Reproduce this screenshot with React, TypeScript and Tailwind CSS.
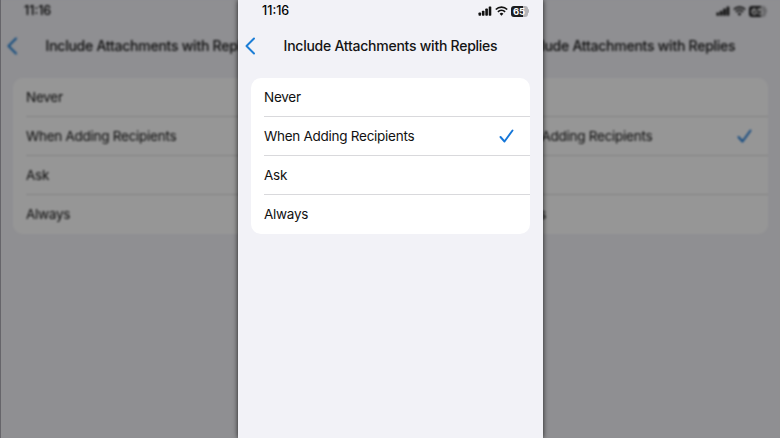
const OPTIONS = ["Never", "When Adding Recipients", "Ask", "Always"];

function Screen() {
  return (
    <div className="w-[305px] h-[438px] shrink-0 bg-[#f2f2f7] flex flex-col text-black">
      <div className="h-[22px] pl-6 pr-[14px] flex items-center justify-between">
        <span className="text-[12.5px] font-medium leading-none">11:16</span>
        <div className="flex items-center gap-[3px]">
          <svg width="14" height="10" viewBox="0 0 14 10" fill="#111">
            <rect x="0.5" y="6.6" width="2.6" height="3.2" rx="0.7" />
            <rect x="3.9" y="4.8" width="2.6" height="5" rx="0.7" />
            <rect x="7.3" y="2.6" width="2.6" height="7.2" rx="0.7" />
            <rect x="10.7" y="0.4" width="2.6" height="9.4" rx="0.7" />
          </svg>
          <svg width="13" height="10" viewBox="0 0 13 10" fill="none" stroke="#111" strokeWidth="1.7">
            <path d="M.8 3.5a8.2 8.2 0 0 1 11.4 0" />
            <path d="M2.9 5.8a5.2 5.2 0 0 1 7.2 0" />
            <path d="M6.5 9.8 4.6 7.8a2.7 2.7 0 0 1 3.8 0z" fill="#111" stroke="none" />
          </svg>
          <div className="flex items-center">
            <div className="w-[17px] h-[11px] rounded-[3px] bg-[linear-gradient(90deg,#1c1c1e_0,#1c1c1e_72%,#b4b4b8_72%)] text-white text-[9.5px] font-bold leading-[11px] text-center">
              65
            </div>
            <div className="w-[1.5px] h-[4px] bg-[#b4b4b8] rounded-r-sm" />
          </div>
        </div>
      </div>
      <div className="relative h-[48px] flex items-center justify-center">
        <svg className="absolute left-[6px] top-[15px]" width="12" height="18" viewBox="0 0 12 18" fill="none" stroke="#1c7ed6" strokeWidth="2" strokeLinecap="round" strokeLinejoin="round">
          <path d="M10 1.5 2.5 9l7.5 7.5" />
        </svg>
        <span className="text-[14px] font-medium tracking-[-0.25px] leading-none text-[#141414]">Include Attachments with Replies</span>
      </div>
      <div className="mx-[13px] mt-[8px] bg-white rounded-[10px] flex flex-col">
        {OPTIONS.map((o, i) => (
          <div key={o} className={`ml-[13px] h-[39px] pr-[16px] flex items-center justify-between ${i < 3 ? "border-b border-[#d9d9dc]" : ""}`}>
            <span className="text-[13.5px] tracking-[-0.27px] leading-none text-[#111] mt-[1px]">{o}</span>
            {i === 1 && (
              <svg width="15" height="14" viewBox="0 0 15 14" fill="none" stroke="#1576d8" strokeWidth="1.9" strokeLinecap="round" strokeLinejoin="round">
                <path d="M1.5 8 5.5 12.5 13.5 1.5" />
              </svg>
            )}
          </div>
        ))}
      </div>
    </div>
  );
}

export default function App() {
  return (
    <div className="w-[780px] h-[438px] overflow-hidden flex bg-[#8e8d93] font-['Inter',sans-serif]">
      <div className="w-[238px] h-full overflow-hidden flex justify-start shrink-0 border-l border-[#66656a]">
        <div className="-ml-px blur-[1.3px] brightness-[.59]"><Screen /></div>
      </div>
      <div className="relative z-10 w-[305px] shrink-0 shadow-[0_0_5px_rgba(0,0,0,0.8)]">
        <Screen />
      </div>
      <div className="w-[237px] h-full overflow-hidden flex justify-end shrink-0">
        <div className="blur-[1.3px] brightness-[.59] -mr-px"><Screen /></div>
      </div>
    </div>
  );
}
